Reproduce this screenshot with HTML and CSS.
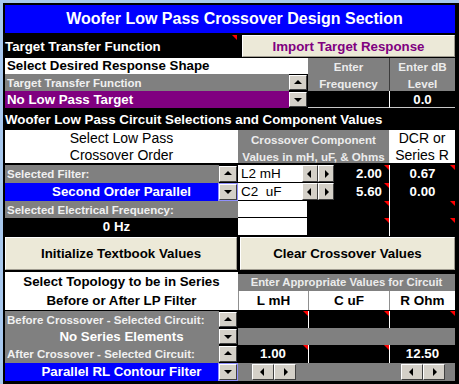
FILE: index.html
```html
<!DOCTYPE html>
<html>
<head>
    <title>Woofer Low Pass Crossover Design Section</title>
    <link rel="stylesheet" href="styles.css">
</head>
<body>
<div class="frame">
  <div class="sheet">
    <h1 class="title">Woofer Low Pass Crossover Design Section</h1>

    <div class="bar">
      <span class="bar-label note">Target Transfer Function</span>
      <button class="import">Import Target Response</button>
    </div>

    <div class="target">
      <div class="shape">Select Desired Response Shape</div>
      <div class="head-gray two-row">Enter<br>Frequency</div>
      <div class="head-gray two-row split">Enter dB<br>Level</div>
      <div class="gray-label">Target Transfer Function</div>
      <div class="spin up"></div>
      <div class="purple-row">No Low Pass Target</div>
      <div class="spin down"></div>
      <div class="black-cell underline"></div>
      <div class="value center white-split underline">0.0</div>
    </div>

    <div class="section-head">Woofer Low Pass Circuit Selections and Component Values</div>

    <div class="circuit">
      <div class="white-head span2">Select Low Pass<br>Crossover Order</div>
      <div class="head-gray span4 tall">Crossover Component<br>Values in mH, uF, &amp; Ohms</div>
      <div class="white-head">DCR or<br>Series R</div>
      <div class="spacer span7"></div>

      <div class="gray-label">Selected Filter:</div>
      <div class="spin up"></div>
      <div class="name-cell">L2 mH</div>
      <div class="arrows span2"><span class="arrow left"></span><span class="arrow right"></span></div>
      <div class="value right note">2.00</div>
      <div class="value center white-split note">0.67</div>

      <div class="blue-row">Second Order Parallel</div>
      <div class="spin down active"></div>
      <div class="name-cell">C2&nbsp; uF</div>
      <div class="arrows span2"><span class="arrow left"></span><span class="arrow right"></span></div>
      <div class="value right note">5.60</div>
      <div class="value center white-split">0.00</div>

      <div class="gray-label span2">Selected Electrical Frequency:</div>
      <div class="blank-white span2"></div>
      <div class="black-cell span2 note"></div>
      <div class="value white-split note"></div>

      <div class="value center span2 hz">0 Hz</div>
      <div class="blank-white span2"></div>
      <div class="black-cell span2 note"></div>
      <div class="value white-split note"></div>
    </div>

    <div class="buttons">
      <button class="big-btn init">Initialize Textbook Values</button>
      <button class="big-btn clear">Clear Crossover Values</button>
    </div>

    <div class="topology">
      <div class="topo-head">Select Topology to be in Series<br>Before or After LP Filter</div>
      <div class="spacer span3"></div>
      <div class="head-gray span3 small-head">Enter Appropriate Values for Circuit</div>
      <div class="col-head">L mH</div>
      <div class="col-head">C uF</div>
      <div class="col-head">R Ohm</div>
      <div class="spacer span5"></div>

      <div class="gray-label">Before Crossover - Selected Circuit:</div>
      <div class="spin up"></div>
      <div class="value note"></div>
      <div class="value white-split note"></div>
      <div class="value white-split note"></div>

      <div class="gray-label centered-bold">No Series Elements</div>
      <div class="spin down"></div>
      <div class="gray-fill span3"></div>

      <div class="gray-label">After Crossover - Selected Circuit:</div>
      <div class="spin up"></div>
      <div class="value center note">1.00</div>
      <div class="value white-split note"></div>
      <div class="value center white-split">12.50</div>

      <div class="blue-row">Parallel RL Contour Filter</div>
      <div class="spin down active"></div>
      <div class="gray-fill scroll-cell"><span class="arrow left wide"></span><span class="arrow right wide"></span></div>
      <div class="gray-fill"></div>
      <div class="gray-fill scroll-cell"><span class="arrow left wide"></span><span class="arrow right wide"></span></div>
    </div>
  </div>
</div>
</body>
</html>
```

FILE: styles.css
```css
body {
    margin: 0;
    background-color: #000;
    font-family: "Liberation Sans", Arial, sans-serif;
    font-size: 13.3px;
    font-weight: bold;
    color: #fff;
}

.frame {
    height: 384px;
    box-sizing: border-box;
    border-top: 3px solid #a8c8ee;
    border-left: 3px solid #a8c8ee;
    padding: 2px 0 0 2px;
}

.sheet {
    width: 450px;
}

.title {
    margin: 0;
    height: 28px;
    background-color: #0000ff;
    color: #fff;
    font-size: 16px;
    display: flex;
    align-items: center;
    justify-content: center;
    padding-left: 9px;
}

/* top bar with the import button */
.bar {
    display: flex;
    height: 24px;
}

.bar-label {
    width: 233px;
    line-height: 27px;
}

.import {
    margin: 2px 0 0 4px;
    width: 213px;
    height: 22px;
    background-color: #ece9d8;
    border: 1px solid;
    border-color: #fff #a09c90 #a09c90 #fff;
    color: #800080;
    font-family: inherit;
    font-size: 13.3px;
    font-weight: bold;
    padding: 0;
}

/* comment markers */
.note {
    position: relative;
}

.note::after {
    content: "";
    position: absolute;
    top: 0;
    right: 0;
    border-top: 5px solid #ff0000;
    border-left: 5px solid transparent;
}

.bar-label.note::after {
    top: 2px;
    right: 1px;
}

.target {
    display: grid;
    grid-template-columns: 284px 19px 81px 66px;
    grid-template-rows: 16px 17px 17px;
    margin-top: 1px;
}

.shape {
    grid-column: span 2;
    background-color: #fff;
    color: #000;
    padding-left: 2px;
    line-height: 16px;
}

.head-gray {
    background-color: #808080;
    color: #ececec;
    font-size: 11.6px;
    text-align: center;
    line-height: 17px;
}

.two-row {
    grid-row: span 2;
}

.split {
    border-left: 1px solid #3c3c3c;
}

.gray-label {
    background-color: #808080;
    color: #f0f0f0;
    font-size: 11.5px;
    padding-left: 2px;
    display: flex;
    align-items: center;
}

.purple-row {
    background-color: #800080;
    color: #fff;
    padding-left: 2px;
    line-height: 17px;
}

.blue-row {
    background-color: #0000ff;
    color: #fff;
    text-align: center;
    padding-left: 19px;
    line-height: 18px;
}

.black-cell {
    background-color: #000;
}

.underline {
    border-bottom: 1px solid #c8c8c8;
}

.value {
    color: #fff;
    line-height: 18px;
}

.value.center {
    text-align: center;
}

.value.right {
    text-align: right;
    padding-right: 7px;
}

.hz {
    padding-right: 10px;
}

.white-split {
    border-left: 1px solid #fff;
}

/* spin buttons */
.spin {
    background-color: #d4d0c8;
    border: 1px solid;
    border-color: #fff #404040 #404040 #fff;
    margin: 1px 1px 1px 0;
    position: relative;
}

.spin.active {
    outline: 1px solid #9090ff;
}

.spin::after {
    content: "";
    position: absolute;
    left: 50%;
    top: 50%;
    margin-left: -4px;
    border-left: 4px solid transparent;
    border-right: 4px solid transparent;
}

.spin.up::after {
    margin-top: -3px;
    border-bottom: 4px solid #000;
}

.spin.down::after {
    margin-top: -2px;
    border-top: 4px solid #000;
}

.section-head {
    height: 22px;
    line-height: 23px;
}

.circuit {
    display: grid;
    grid-template-columns: 214px 19px 64px 5px 28px 54px 66px;
    grid-template-rows: 33px 2px 18px 18px 17px 18px;
}

.span2 { grid-column: span 2; }
.span3 { grid-column: span 3; }
.span4 { grid-column: span 4; }
.span5 { grid-column: span 5; }
.span7 { grid-column: span 7; }

.white-head {
    background-color: #fff;
    color: #000;
    font-weight: normal;
    font-size: 14px;
    line-height: 17px;
    text-align: center;
}

.tall {
    line-height: 17px;
    padding-top: 1px;
}

.name-cell {
    background-color: #fff;
    color: #000;
    font-weight: normal;
    font-size: 13.5px;
    padding-left: 3px;
    line-height: 17px;
    border-bottom: 1px solid #000;
}

.blank-white {
    background-color: #fff;
    border-bottom: 1px solid #000;
}

.arrows {
    display: flex;
    padding: 0 0 1px 0;
}

.arrow {
    width: 16px;
    background-color: #d4d0c8;
    border: 1px solid;
    border-color: #fff #404040 #404040 #fff;
    box-sizing: border-box;
    position: relative;
}

.arrow::after {
    content: "";
    position: absolute;
    top: 50%;
    left: 50%;
    margin-top: -4px;
    border-top: 4px solid transparent;
    border-bottom: 4px solid transparent;
}

.arrow.left::after {
    margin-left: -3px;
    border-right: 4px solid #000;
}

.arrow.right::after {
    margin-left: -1px;
    border-left: 4px solid #000;
}

.arrow.wide {
    width: 22px;
}

.buttons {
    display: flex;
    gap: 3px;
    margin-top: 1px;
    height: 33px;
}

.big-btn {
    background-color: #ece9d8;
    border: 1px solid;
    border-color: #fff #a09c90 #a09c90 #fff;
    color: #000;
    font-family: inherit;
    font-size: 13.3px;
    font-weight: bold;
    padding: 0;
}

.init {
    width: 232px;
}

.clear {
    width: 215px;
}

.topology {
    display: grid;
    grid-template-columns: 214px 19px 70px 81px 66px;
    grid-template-rows: 2px 17px 19px 1px 17px 17px 18px 18px;
    margin-top: 2px;
}

.topo-head {
    grid-column: span 2;
    grid-row: span 3;
    background-color: #fff;
    color: #000;
    text-align: center;
    line-height: 19px;
}

.small-head {
    font-size: 11.3px;
    line-height: 17px;
}

.col-head {
    background-color: #fff;
    color: #000;
    font-size: 13.5px;
    text-align: center;
    line-height: 19px;
    border-left: 1px solid #909090;
}

.centered-bold {
    justify-content: center;
    font-size: 13.3px;
    color: #fff;
    padding-left: 19px;
}

.gray-fill {
    background-color: #808080;
}

.scroll-cell {
    display: flex;
    justify-content: center;
    padding: 1px 0 1px 2px;
}
```
